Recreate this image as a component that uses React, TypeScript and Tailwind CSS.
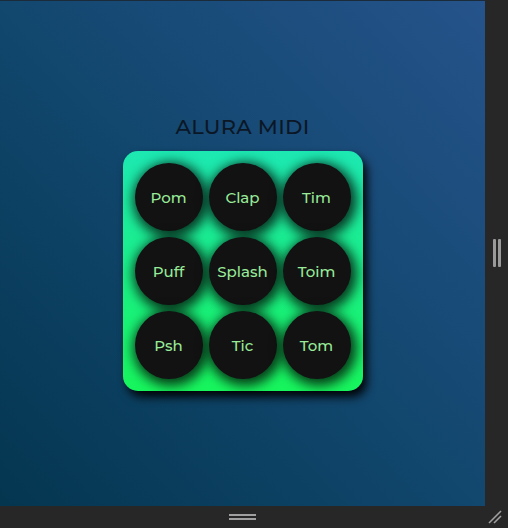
import React from "react";

const pads = ["Pom", "Clap", "Tim", "Puff", "Splash", "Toim", "Psh", "Tic", "Tom"];

export default function App() {
  return (
    <div className="w-[508px] h-[528px] flex flex-col bg-[#272727] overflow-hidden" style={{ fontFamily: "Montserrat, 'Open Sans', Lato, sans-serif" }}>
      <div className="flex h-[506px]">
        <div className="w-[485px] h-full border-t border-[#1b2b3a] bg-[linear-gradient(to_top_right,#043650_0%,#12476e_50%,#25538b_100%)] flex flex-col items-center">
          <h1 className="mt-[112px] text-[21px] leading-[28px] font-medium text-[#0c1726] tracking-[0.3px]">ALURA MIDI</h1>
          <div className="mt-[10px] w-[240px] h-[240px] rounded-[15px] p-[12px] grid grid-cols-3 gap-[6px] bg-[linear-gradient(to_bottom,#1de8b2,#17f55c)] shadow-[4px_6px_10px_rgba(0,0,0,0.95)]">
            {pads.map((p) => (
              <button
                key={p}
                className="w-[68px] h-[68px] pt-[2px] rounded-full bg-[#121212] text-[#98eb98] text-[15px] font-medium shadow-[2px_3px_12px_4px_rgba(0,0,0,0.75)] flex items-center justify-center"
              >
                {p}
              </button>
            ))}
          </div>
        </div>
        <div className="flex-1 flex items-center justify-center">
          <div className="flex gap-[2px] h-[28px]">
            <div className="w-[3px] h-full bg-[#9a9a9a] rounded-[1px]" />
            <div className="w-[3px] h-full bg-[#9a9a9a] rounded-[1px]" />
          </div>
        </div>
      </div>
      <div className="flex-1 flex">
        <div className="w-[485px] flex items-center justify-center">
          <div className="flex flex-col gap-[2px] w-[27px]">
            <div className="h-[2px] w-full bg-[#a0a0a0]" />
            <div className="h-[2px] w-full bg-[#a0a0a0]" />
          </div>
        </div>
        <div className="flex-1 flex items-end justify-end pr-[6px] pb-[4px]">
          <svg width="14" height="14" viewBox="0 0 14 14">
            <line x1="1" y1="13" x2="13" y2="1" stroke="#a0a0a0" strokeWidth="1.6" />
            <line x1="6" y1="13" x2="13" y2="6" stroke="#a0a0a0" strokeWidth="1.6" />
          </svg>
        </div>
      </div>
    </div>
  );
}
